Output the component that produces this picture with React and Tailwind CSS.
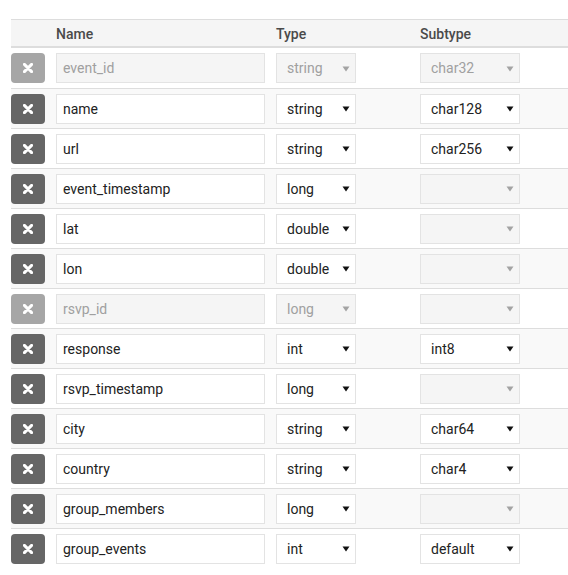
import React from "react";

const rows = [
  { name: "event_id", type: "string", sub: "char32", locked: true, subDisabled: true },
  { name: "name", type: "string", sub: "char128" },
  { name: "url", type: "string", sub: "char256" },
  { name: "event_timestamp", type: "long", sub: "", subDisabled: true },
  { name: "lat", type: "double", sub: "", subDisabled: true },
  { name: "lon", type: "double", sub: "", subDisabled: true },
  { name: "rsvp_id", type: "long", sub: "", locked: true, subDisabled: true },
  { name: "response", type: "int", sub: "int8" },
  { name: "rsvp_timestamp", type: "long", sub: "", subDisabled: true },
  { name: "city", type: "string", sub: "char64" },
  { name: "country", type: "string", sub: "char4" },
  { name: "group_members", type: "long", sub: "", subDisabled: true },
  { name: "group_events", type: "int", sub: "default" },
];

function Arrow({ disabled }) {
  return (
    <svg width="8" height="6" viewBox="0 0 8 6" className="shrink-0">
      <path d="M0.5 0.5 L7.5 0.5 L4 5.5 Z" fill={disabled ? "#a3a3a3" : "#111111"} />
    </svg>
  );
}

function Select({ value, disabled, width }) {
  return (
    <div
      className={`${width} h-[30px] flex items-center justify-between pl-[10px] pr-[5px] pt-[1px] border border-[#e3e3e3] ${
        disabled ? "bg-[#f5f5f5] text-[#a0a0a0]" : "bg-white text-[#222]"
      }`}
    >
      <span>{value}</span>
      <Arrow disabled={disabled} />
    </div>
  );
}

function DeleteButton({ disabled }) {
  return (
    <button
      className={`w-[34px] h-[30px] rounded-[4px] flex items-center justify-center shrink-0 ${
        disabled ? "bg-[#a6a6a6]" : "bg-[#666666]"
      }`}
    >
      <svg width="10" height="10" viewBox="0 0 10 10">
        <path d="M1.4 1.4 L8.6 8.6 M8.6 1.4 L1.4 8.6" stroke="#ffffff" strokeWidth="3" strokeLinecap="round" />
      </svg>
    </button>
  );
}

export default function App() {
  return (
    <div
      className="w-[568px] h-[575px] bg-white overflow-hidden pt-[19px] pl-[11px] text-[14px]"
      style={{ fontFamily: "Roboto, 'Liberation Sans', sans-serif" }}
    >
      <div className="border-t border-[#dddddd]">
        <div className="flex items-center h-[28px] pt-[2px] bg-[#f5f5f5] border-b-2 border-[#dddddd] font-medium text-[#4a4a4a]">
          <div className="w-[45px]" />
          <div className="w-[220px]">Name</div>
          <div className="w-[144px]">Type</div>
          <div>Subtype</div>
        </div>
        {rows.map((r, i) => (
          <div
            key={r.name}
            className={`flex items-center ${i === 0 ? "h-[40px]" : "h-[40px] border-t border-[#dddddd]"} ${
              i % 2 === 1 ? "bg-[#f9f9f9]" : "bg-white"
            }`}
          >
            <DeleteButton disabled={r.locked} />
            <div
              className={`ml-[11px] w-[209px] h-[30px] flex items-center pl-[6px] pt-[1px] border border-[#e3e3e3] ${
                r.locked ? "bg-[#f5f5f5] text-[#a0a0a0]" : "bg-white text-[#222]"
              }`}
            >
              {r.name}
            </div>
            <div className="ml-[11px]">
              <Select value={r.type} disabled={r.locked} width="w-[80px]" />
            </div>
            <div className="ml-[64px]">
              <Select value={r.sub} disabled={r.subDisabled} width="w-[100px]" />
            </div>
          </div>
        ))}
      </div>
    </div>
  );
}
